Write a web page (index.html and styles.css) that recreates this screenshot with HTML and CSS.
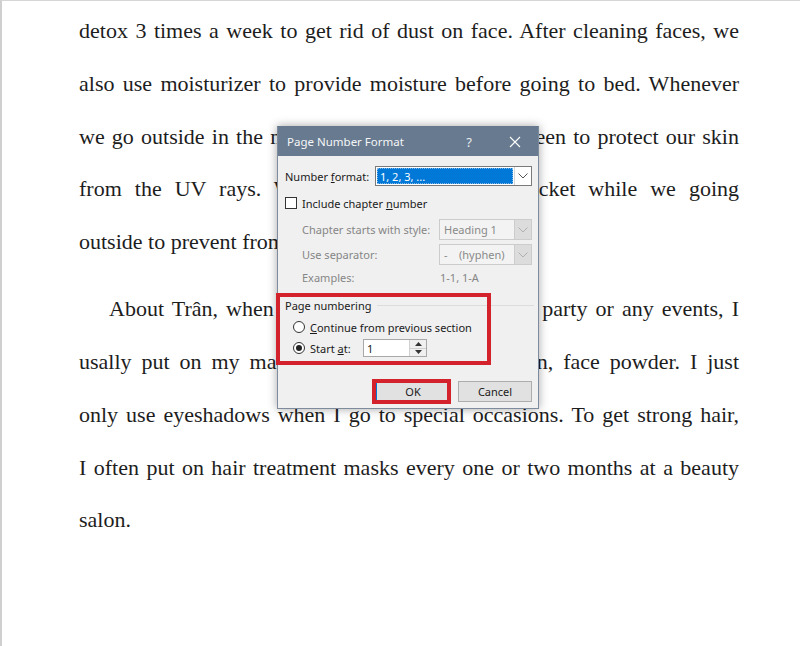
FILE: index.html
```html
<!DOCTYPE html>
<html lang="en">
<head>
<meta charset="utf-8">
<title>Page Number Format</title>
<link rel="stylesheet" href="styles.css">
</head>
<body>
<div class="page">
  <div class="doc">
    <p class="para">
      <span class="ln">detox 3 times a week to get rid of dust on face. After cleaning faces, we</span>
      <span class="ln">also use moisturizer to provide moisture before going to bed. Whenever</span>
      <span class="ln">we go outside in the morning, we often use sunscreen to protect our skin</span>
      <span class="ln">from the UV rays. We usually wear a long jacket while we going</span>
      <span class="ln last">outside to prevent from sunburn.</span>
    </p>
    <p class="para">
      <span class="ln first">About Trân, when I go to a wedding, a dinner party or any events, I</span>
      <span class="ln">usally put on my makeup such as tint, foundation, face powder. I just</span>
      <span class="ln">only use eyeshadows when I go to special occasions. To get strong hair,</span>
      <span class="ln">I often put on hair treatment masks every one or two months at a beauty</span>
      <span class="ln last">salon.</span>
    </p>
  </div>

  <div class="dialog">
    <div class="titlebar">
      <span class="title">Page Number Format</span>
      <span class="tb-btn help">?</span>
      <span class="tb-btn close">
        <svg width="12" height="12" viewBox="0 0 12 12"><path d="M1 1 L11 11 M11 1 L1 11" stroke="#ffffff" stroke-width="1.1" fill="none"/></svg>
      </span>
    </div>
    <div class="body">
      <div class="row r1">
        <span class="lbl lbl-fmt">Number <u>f</u>ormat:</span>
        <div class="combo combo-active">
          <span class="combo-val sel">1, 2, 3, ...</span>
          <span class="combo-arrow"><svg width="10" height="6" viewBox="0 0 10 6"><path d="M0.5 0.5 L5 5 L9.5 0.5" stroke="#555" fill="none"/></svg></span>
        </div>
      </div>
      <div class="row r2">
        <span class="check"></span>
        <span class="opt-lbl">Include chapter <u>n</u>umber</span>
      </div>
      <div class="row r3 sub">
        <span class="lbl lbl-sub dis">Chapter starts with style:</span>
        <div class="combo combo-dis">
          <span class="combo-val">Heading 1</span>
          <span class="combo-arrow"><svg width="10" height="6" viewBox="0 0 10 6"><path d="M0.5 0.5 L5 5 L9.5 0.5" stroke="#b0b0b0" fill="none"/></svg></span>
        </div>
      </div>
      <div class="row r4 sub">
        <span class="lbl lbl-sub dis">Use separator:</span>
        <div class="combo combo-dis">
          <span class="combo-val"><span class="dash">-</span>(hyphen)</span>
          <span class="combo-arrow"><svg width="10" height="6" viewBox="0 0 10 6"><path d="M0.5 0.5 L5 5 L9.5 0.5" stroke="#b0b0b0" fill="none"/></svg></span>
        </div>
      </div>
      <div class="row r5 sub">
        <span class="lbl lbl-sub dis">Examples:</span>
        <span class="dis ex-val">1-1, 1-A</span>
      </div>
      <div class="row r6">
        <span class="group-lbl">Page numbering</span>
        <span class="group-line"></span>
      </div>
      <div class="row r7 radio-row">
        <span class="radio"></span>
        <span class="opt-lbl"><u>C</u>ontinue from previous section</span>
      </div>
      <div class="row r8 radio-row">
        <span class="radio on"><span class="dot"></span></span>
        <span class="opt-lbl start-lbl">Start <u>a</u>t:</span>
        <div class="spin">
          <span class="spin-val">1</span>
          <span class="spin-btns">
            <span class="spin-b"><svg width="7" height="4" viewBox="0 0 7 4"><path d="M0 4 L3.5 0 L7 4 Z" fill="#333"/></svg></span>
            <span class="spin-b"><svg width="7" height="4" viewBox="0 0 7 4"><path d="M0 0 L3.5 4 L7 0 Z" fill="#333"/></svg></span>
          </span>
        </div>
      </div>
      <div class="row r9">
        <span class="btn btn-ok">OK</span>
        <span class="btn">Cancel</span>
      </div>
    </div>
  </div>

  <div class="mark mark-group"></div>
  <div class="mark mark-ok"></div>
</div>
</body>
</html>
```

FILE: styles.css
```css
html, body {
  margin: 0;
  padding: 0;
  background: #ffffff;
}

body {
  width: 800px;
  height: 646px;
  overflow: hidden;
}

.page {
  position: relative;
  width: 800px;
  height: 646px;
  box-sizing: border-box;
  border-top: 1px solid #d6d6d6;
  border-left: 2px solid #cfcfcf;
  background: #ffffff;
}

/* ---------- document text ---------- */
.doc {
  padding: 4px 0 0 77px;
  width: 660px;
  font-family: "Liberation Serif", "Times New Roman", serif;
  font-size: 22px;
  line-height: 52.75px;
  color: #1d1d1d;
}

.para {
  margin: 0 0 14.5px;
}

.ln {
  display: block;
  text-align: justify;
  text-align-last: justify;
}

.ln.last {
  text-align: left;
  text-align-last: left;
}

.ln.first {
  text-indent: 30px;
}

/* ---------- dialog ---------- */
.dialog {
  position: absolute;
  left: 275px;
  top: 125px;
  width: 262px;
  height: 283px;
  box-sizing: border-box;
  border: 1px solid #7d8b9c;
  border-top-color: #687a8f;
  background: #f0f0f0;
  box-shadow: 0 0 9px rgba(0, 0, 0, 0.35);
  font-family: "Noto Sans", "Open Sans", sans-serif;
  font-size: 11px;
  color: #1a1a1a;
}

.titlebar {
  display: flex;
  align-items: center;
  height: 29px;
  background: #687a8f;
  color: #ffffff;
  padding-left: 9px;
}

.title {
  flex: 1;
  font-size: 11.5px;
  color: #f4f6f8;
}

.tb-btn {
  width: 46px;
  height: 29px;
  display: flex;
  align-items: center;
  justify-content: center;
  color: #e8ecf0;
  font-size: 13px;
}

.body {
  padding: 0 6px 0 7px;
}

.row {
  display: flex;
  align-items: center;
}

.r1 { margin-top: 10px; height: 20px; }
.r2 { margin-top: 9px; height: 16px; }
.r3 { margin-top: 8px; height: 21px; }
.r4 { margin-top: 4px; height: 21px; }
.r5 { margin-top: 5px; height: 14px; }
.r6 { margin-top: 14px; height: 14px; }
.r7 { margin-top: 8px; height: 14px; }
.r8 { margin-top: 5px; height: 18px; }
.r9 { margin-top: 24px; height: 21px; justify-content: flex-end; gap: 8px; }

.sub { padding-left: 17px; }
.radio-row { padding-left: 8px; }

.lbl { flex: none; }
.lbl-fmt { width: 90px; }
.lbl-sub { width: 137px; }

.dis { color: #868686; }

/* combos */
.combo {
  flex: 1;
  display: flex;
  height: 100%;
  box-sizing: border-box;
  border: 1px solid #7a7a7a;
  background: #ffffff;
}

.combo-val {
  flex: 1;
  display: flex;
  align-items: center;
  padding-left: 3px;
  white-space: nowrap;
}

.combo-val.sel {
  margin: 1px;
  background: #0078d7;
  color: #ffffff;
  outline: 1px dotted #7fb6e6;
  outline-offset: -1px;
}

.combo-arrow {
  width: 16px;
  flex: none;
  display: flex;
  align-items: center;
  justify-content: center;
  border-left: 1px solid #d6d6d6;
}

.combo-dis {
  border-color: #cccccc;
  background: #f3f3f3;
  color: #8a8a8a;
}

.combo-dis .combo-val {
  padding-left: 4px;
}

.combo-dis .combo-arrow {
  background: #dcdcdc;
  border-left: 1px solid #cccccc;
}

.dash {
  display: inline-block;
  width: 15px;
}

.ex-val {
  padding-left: 1px;
}

/* checkbox & radios */
.check {
  width: 12px;
  height: 12px;
  box-sizing: border-box;
  border: 1px solid #333333;
  background: #ffffff;
  flex: none;
}

.opt-lbl {
  margin-left: 5px;
}

.radio {
  width: 12px;
  height: 12px;
  box-sizing: border-box;
  border: 1px solid #333333;
  border-radius: 50%;
  background: #ffffff;
  flex: none;
  display: flex;
  align-items: center;
  justify-content: center;
}

.radio .dot {
  width: 6px;
  height: 6px;
  border-radius: 50%;
  background: #222222;
}

.start-lbl {
  width: 53px;
  flex: none;
}

.spin {
  width: 64px;
  height: 18px;
  box-sizing: border-box;
  border: 1px solid #a8a8a8;
  background: #ffffff;
  display: flex;
}

.spin-val {
  flex: 1;
  padding-left: 3px;
  display: flex;
  align-items: center;
}

.spin-btns {
  width: 16px;
  display: flex;
  flex-direction: column;
  border-left: 1px solid #d0d0d0;
  background: #f0f0f0;
}

.spin-b {
  flex: 1;
  display: flex;
  align-items: center;
  justify-content: center;
}

.spin-b + .spin-b {
  border-top: 1px solid #d0d0d0;
}

/* group */
.group-lbl {
  flex: none;
}

.group-line {
  flex: 1;
  height: 1px;
  background: #dcdcdc;
  margin: 0 -2px 0 6px;
}

/* buttons */
.btn {
  width: 74px;
  height: 21px;
  box-sizing: border-box;
  border: 1px solid #adadad;
  background: #e1e1e1;
  display: flex;
  align-items: center;
  justify-content: center;
}

.btn-ok {
  border-color: #0078d7;
}

/* red annotation boxes */
.mark {
  position: absolute;
  box-sizing: border-box;
  border: 4px solid #d3222c;
}

.mark-group {
  left: 274px;
  top: 292px;
  width: 215px;
  height: 72px;
}

.mark-ok {
  left: 370px;
  top: 378px;
  width: 79px;
  height: 25px;
}
```
